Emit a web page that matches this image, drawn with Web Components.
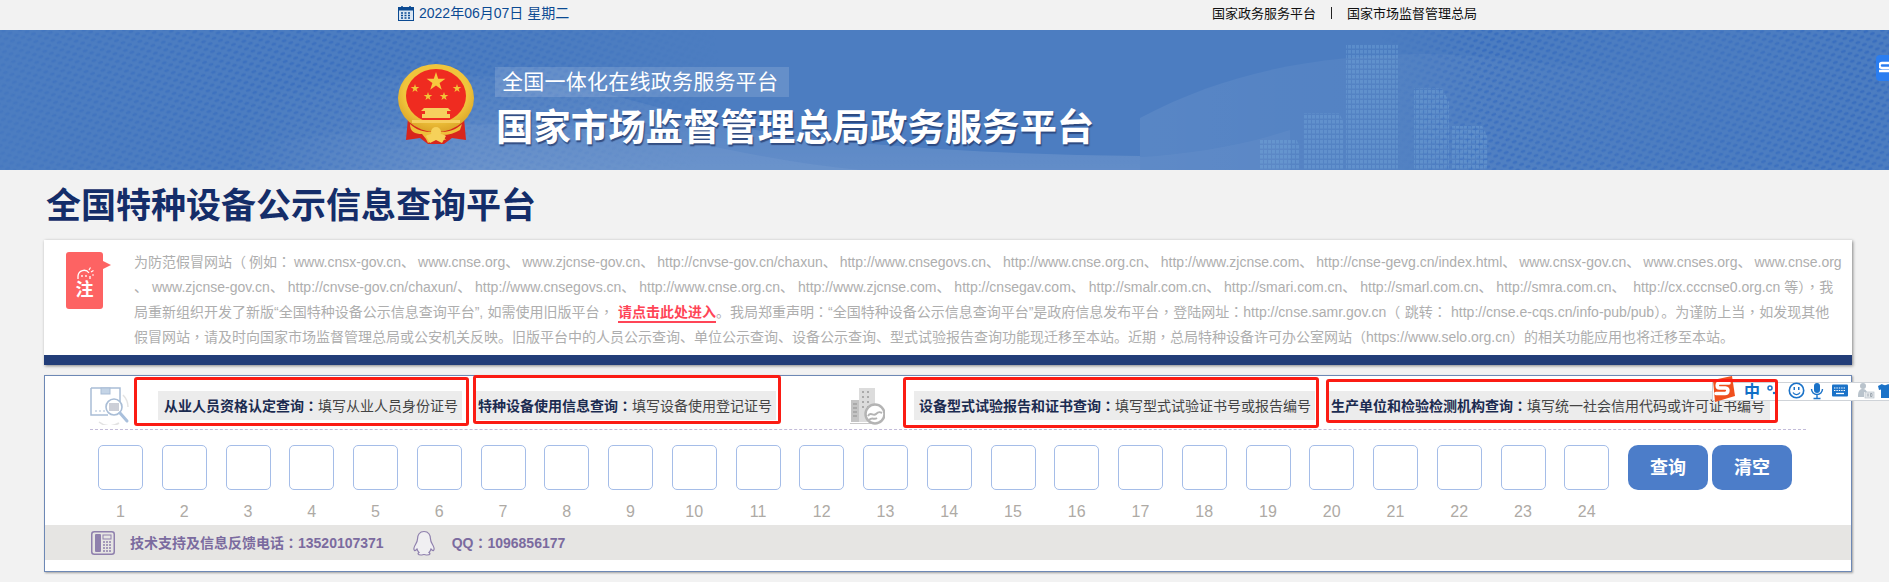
<!DOCTYPE html>
<html>
<head>
<meta charset="utf-8">
<title>全国特种设备公示信息查询平台</title>
<style>
  html, body { margin: 0; height: 582px; overflow: hidden; background: #f2f2f2; }
  body { position: relative; font-family: "Liberation Sans", "Noto Sans CJK SC", sans-serif; }
  /* the reference has centred full-width punctuation */
  i.p { font-style: normal; font-family: "Noto Sans CJK TC", sans-serif; }
  /* nested in a line span, so ::slotted can't reach it */
  notice-card a { color: #ff4557; font-weight: bold; padding-bottom: 1px; border-bottom: 2px solid #ff4557; }
</style>
</head>
<body>
<page-lines></page-lines>

<top-bar>
  <span slot="date">2022年06月07日 星期二</span>
  <span slot="link-a">国家政务服务平台</span>
  <span slot="link-b">国家市场监督管理总局</span>
</top-bar>

<site-banner>
  <span slot="sub">全国一体化在线政务服务平台</span>
  国家市场监督管理总局政务服务平台
</site-banner>

<page-title>全国特种设备公示信息查询平台</page-title>

<notice-card><span style="word-spacing:-.9px">为防范假冒网站<i class="p">（</i> 例如<i class="p">：</i> www.cnsx-gov.cn、 www.cnse.org、 www.zjcnse-gov.cn、 http://cnvse-gov.cn/chaxun、 http://www.cnsegovs.cn、 http://www.cnse.org.cn、 http://www.zjcnse.com、 http://cnse-gevg.cn/index.html、 www.cnsx-gov.cn、 www.cnses.org、 www.cnse.org</span><br>、 www.zjcnse-gov.cn、 http://cnvse-gov.cn/chaxun/、 http://www.cnsegovs.cn、 http://www.cnse.org.cn、 http://www.zjcnse.com、 http://cnsegav.com、 http://smalr.com.cn、 http://smari.com.cn、 http://smarl.com.cn、 http://smra.com.cn、 &nbsp;http://cx.cccnse0.org.cn 等<i class="p">）</i><i class="p">，</i>我<br><span style="word-spacing:.5px">局重新组织开发了新版“全国特种设备公示信息查询平台”, 如需使用旧版平台<i class="p">，</i> <a>请点击此处进入</a>。我局郑重声明<i class="p">：</i>“全国特种设备公示信息查询平台”是政府信息发布平台<i class="p">，</i>登陆网址<i class="p">：</i>http://cnse.samr.gov.cn<i class="p">（</i> 跳转<i class="p">：</i> http://cnse.e-cqs.cn/info-pub/pub<i class="p">）</i>。为谨防上当<i class="p">，</i>如发现其他</span><br>假冒网站<i class="p">，</i>请及时向国家市场监督管理总局或公安机关反映。旧版平台中的人员公示查询、单位公示查询、设备公示查询、型式试验报告查询功能现迁移至本站。近期<i class="p">，</i>总局特种设备许可办公室网站<i class="p">（</i>https://www.selo.org.cn<i class="p">）</i>的相关功能应用也将迁移至本站。</notice-card>

<query-panel>
  <svg slot="tabs" width="40" height="38" viewBox="0 0 40 38" style="flex:none;margin:-4px 28px 0 0">
    <g fill="none" stroke="#a9bdd6" stroke-width="1.5">
      <path d="M1 1h29v22" /><path d="M1 1v27h17" />
    </g>
    <rect x="11" y="1" width="9" height="6" fill="#c4d4e6" stroke="#a9bdd6"/>
    <path d="M5 24h2m2 0h2m2 0h2" stroke="#a9bdd6" stroke-width="1.2"/>
    <path d="M9 35a17 17 0 0 0 20 1M33 8a17 17 0 0 1 5 12" fill="none" stroke="#e3e3e3" stroke-width="1.5"/>
    <circle cx="24" cy="20" r="8" fill="#fff" stroke="#a9bdd6" stroke-width="1.6"/>
    <path d="M20 16v8m2-8v8m2-8v8m2-8v8m2-8v8" stroke="#9a9fb0" stroke-width="1"/>
    <path d="M30 26l7 8" stroke="#a9c0dc" stroke-width="3" stroke-linecap="round"/>
  </svg>
  <query-tab slot="tabs" title-text="从业人员资格认定查询" style="--w:304px;--pl:6px;--rt:-14px;--rr:-7px;--rb:-6px;--rl:-24px">填写从业人员身份证号</query-tab>
  <query-tab slot="tabs" title-text="特种设备使用信息查询" style="--w:301px;--pl:3px;margin-left:13px;--rt:-16px;--rr:-5px;--rb:-4px;--rl:-2px">填写设备使用登记证号</query-tab>
  <svg slot="tabs" width="35" height="38" viewBox="0 0 35 38" style="flex:none;margin:-4px 29px 0 74px">
    <rect x="9" y="1" width="16" height="34" fill="#dcdcdc"/>
    <rect x="1" y="13" width="8" height="22" fill="#c4c4c4"/>
    <path d="M12 5h2m3 0h2m-7 5h2m3 0h2m-7 5h2m3 0h2m-7 5h2m3 0h2M3 17h4M3 21h4M3 25h4M3 29h4" stroke="#aaa" stroke-width="2"/>
    <path d="M0 36.500h24" stroke="#c8c8c8"/>
    <circle cx="25" cy="27" r="9.500" fill="#fff" stroke="#b4b4b4" stroke-width="2.500"/>
    <path d="M18 29c3-5 5 1 8-2s4-2 6-1M19 33c3-3 5 0 8-2" fill="none" stroke="#b4b4b4" stroke-width="2"/>
  </svg>
  <query-tab slot="tabs" title-text="设备型式试验报告和证书查询" style="--w:401px;--pl:5px;--rt:-14px;--rr:-4px;--rb:-8px;--rl:-11px">填写型式试验证书号或报告编号</query-tab>
  <query-tab slot="tabs" title-text="生产单位和检验检测机构查询" style="--w:442px;--pl:3px;margin-left:13px;--rt:-12px;--rr:-8px;--rb:-3px;--rl:-2px">填写统一社会信用代码或许可证书编号</query-tab>

  <code-cell slot="cells" num="1"></code-cell><code-cell slot="cells" num="2"></code-cell><code-cell slot="cells" num="3"></code-cell><code-cell slot="cells" num="4"></code-cell><code-cell slot="cells" num="5"></code-cell><code-cell slot="cells" num="6"></code-cell><code-cell slot="cells" num="7"></code-cell><code-cell slot="cells" num="8"></code-cell><code-cell slot="cells" num="9"></code-cell><code-cell slot="cells" num="10"></code-cell><code-cell slot="cells" num="11"></code-cell><code-cell slot="cells" num="12"></code-cell><code-cell slot="cells" num="13"></code-cell><code-cell slot="cells" num="14"></code-cell><code-cell slot="cells" num="15"></code-cell><code-cell slot="cells" num="16"></code-cell><code-cell slot="cells" num="17"></code-cell><code-cell slot="cells" num="18"></code-cell><code-cell slot="cells" num="19"></code-cell><code-cell slot="cells" num="20"></code-cell><code-cell slot="cells" num="21"></code-cell><code-cell slot="cells" num="22"></code-cell><code-cell slot="cells" num="23"></code-cell><code-cell slot="cells" num="24"></code-cell>

  <action-button slot="actions">查询</action-button>
  <action-button slot="actions">清空</action-button>

  <svg slot="footer" width="24" height="24" viewBox="0 0 24 24" style="flex:none">
    <rect x=".75" y=".75" width="22.500" height="22.500" rx="2.500" fill="none" stroke="#8f80ad" stroke-width="1.500"/>
    <rect x="4" y="3" width="6" height="18" rx="1" fill="#8f80ad"/>
    <rect x="12" y="4" width="8" height="4" fill="none" stroke="#8f80ad"/>
    <path d="M12 11h2m1 0h2m1 0h2M12 14h2m1 0h2m1 0h2M12 17h2m1 0h2m1 0h2M12 20h2m1 0h2m1 0h2" stroke="#8f80ad" stroke-width="1.600"/>
  </svg>
  <span slot="footer" style="margin-left:15px">技术支持及信息反馈电话<i class="p">：</i>13520107371</span>
  <svg slot="footer" width="24" height="26" viewBox="0 0 24 26" style="flex:none;margin-left:28px">
    <path d="M12 1.500c-4.500 0-6.500 3.500-6.500 7.500 0 2-.5 3-2 5.500-1.500 2.500-2 5-1 6 .8.500 1.500-.5 2.500-1.500.5 1.500 1 2.500 2 3.500-1.500.8-1.500 2.500 2 2.500 1.500 0 2-.5 3-.5s1.500.5 3 .5c3.500 0 3.500-1.700 2-2.500 1-1 1.500-2 2-3.500 1 1 1.700 2 2.500 1.500 1-1 .5-3.500-1-6-1.500-2.500-2-3.500-2-5.500 0-4-2-7.500-6.500-7.500z" fill="#f0eff2" stroke="#8f80ad" stroke-width="1.200"/>
  </svg>
  <span slot="footer" style="margin-left:16px">QQ<i class="p">：</i>1096856177</span>
</query-panel>

<ime-toolbar></ime-toolbar>

<script>
// shared font stack, shadow styles name it themselves
const FONT = '"Liberation Sans", "Noto Sans CJK SC", sans-serif';

class BaseElement extends HTMLElement {
  constructor() {
    super();
    this.attachShadow({ mode: 'open' });
  }
  connectedCallback() {
    this.shadowRoot.innerHTML = `<style>${this.styles()}</style>${this.render()}`;
  }
  styles() { return ''; }
  render() { return '<slot></slot>'; }
}

// faint curved lines of the page background
class PageLines extends BaseElement {
  styles() {
    return `:host { position: absolute; inset: 0; z-index: -1; display: block; overflow: hidden; }
      svg { display: block; }`;
  }
  render() {
    let top = '';
    for (let i = 0; i < 9; i++) {
      const x = i * 62;
      top += `<path d="M${x - 40} 32C${x + 60} 10 ${x + 130} -4 ${x + 210} -20"/>`;
      top += `<path d="M${1160 + i * 80} 32C${1240 + i * 70} 12 ${1300 + i * 60} -6 ${1400 + i * 50} -24"/>`;
      top += `<path d="M${1120 + i * 60} ${i * 2}C${1300 + i * 40} 34 ${1500 + i * 30} 30 ${1700 + i * 24} -4"/>`;
    }
    top += '<path d="M0 8C120 18 240 14 340 -4M0 26C200 34 330 22 460 -6"/>';
    let low = '';
    for (let i = 0; i < 14; i++) {
      const y = 372 + i * 16;
      low += `<path d="M-10 ${y}C14 ${y + 18} 30 ${y + 30} 46 ${y + 54}"/>`;
      low += `<path d="M1850 ${y + 6}C1866 ${y - 10} 1880 ${y - 16} 1900 ${y - 20}"/>`;
      low += `<path d="M${i * 150 - 30} 582C${i * 150 + 20} 574 ${i * 150 + 60} 570 ${i * 150 + 90} 564"/>`;
      low += `<path d="M${i * 140 + 40} 376C${i * 140 + 70} 370 ${i * 140 + 100} 366 ${i * 140 + 120} 360"/>`;
    }
    return `<svg width="1889" height="582" fill="none" stroke="#dfe7f2" stroke-width="1.300">${top}${low}</svg>`;
  }
}

class TopBar extends BaseElement {
  styles() {
    return `:host { display: flex; align-items: center; height: 30px; padding: 0 412px 4px 398px; box-sizing: border-box; font: 13px/1 ${FONT}; color: #111; }
      .date { display: flex; align-items: center; gap: 5px; font-size: 14px; color: #0b4a92; }
      .links { margin-left: auto; display: flex; align-items: center; gap: 15px; }
      .sep { width: 1px; height: 12px; background: #222; }`;
  }
  render() {
    return `<div class="date">
        <svg width="16" height="15" viewBox="0 0 16 15"><rect x=".5" y="1.500" width="15" height="13" fill="#dbe6f2" stroke="#0b4a92"/><rect x="0" y="1" width="16" height="3.500" fill="#0b4a92"/><path d="M4 0v2M12 0v2" stroke="#0b4a92" stroke-width="1.500"/><path d="M3 7h2m1.500 0h2m1.500 0h2M3 9.500h2m1.500 0h2m1.500 0h2M3 12h2m1.500 0h2m1.500 0h2" stroke="#0b4a92" stroke-width="1.300"/></svg>
        <slot name="date"></slot>
      </div>
      <div class="links"><slot name="link-a"></slot><span class="sep"></span><slot name="link-b"></slot></div>`;
  }
}

class SiteBanner extends BaseElement {
  styles() {
    return `:host { display: flex; position: relative; height: 140px; padding: 34px 0 0 398px; box-sizing: border-box; background: #4c7dc1; overflow: hidden; }
      .deco { position: absolute; left: 0; top: 0; }
      .emblem { position: relative; flex: none; width: 76px; height: 80px; }
      .copy { position: relative; margin-left: 21px; }
      .sub { width: 294px; height: 30px; padding-left: 7px; margin-top: 3px; box-sizing: border-box; background: rgba(255,255,255,.14); font: 21px/30px ${FONT}; letter-spacing: .25px; color: #fff; white-space: nowrap; }
      .main { margin: 11px 0 0 1px; font: bold 37.4px/40px ${FONT}; color: #fff; white-space: nowrap; text-shadow: 1px 2px 1px rgba(30,50,100,.7); }
      .tab { position: absolute; right: 0; top: 25px; width: 13px; height: 26px; background: #2a7df0; border-radius: 4px 0 0 4px; }
      .tab svg { display: block; margin: 6px 0 0 3px; }`;
  }
  render() {
    const tower = (x, y, w, h, slant) =>
      `<path d="M${x} 140V${y}H${x + w - slant}L${x + w} ${y + slant * 2}V140Z" fill="url(#pix)"/>`;
    return `<svg class="deco" width="1889" height="140" viewBox="0 0 1889 140">
        <defs>
          <pattern id="dots" width="11" height="8" patternUnits="userSpaceOnUse" patternTransform="rotate(-18)">
            <ellipse cx="3" cy="2" rx="2.600" ry="1.500" fill="#2f66bd"/><ellipse cx="8.500" cy="6" rx="2.600" ry="1.500" fill="#2f66bd"/>
          </pattern>
          <pattern id="pix" width="4" height="5" patternUnits="userSpaceOnUse">
            <rect width="3" height="3.500" fill="#7fb4e2"/>
          </pattern>
          <radialGradient id="fadeL" gradientUnits="userSpaceOnUse" cx="300" cy="30" r="420" gradientTransform="translate(0 20) scale(1 .7)">
            <stop offset="0" stop-color="#fff" stop-opacity=".55"/><stop offset=".6" stop-color="#fff" stop-opacity=".3"/><stop offset="1" stop-color="#fff" stop-opacity="0"/>
          </radialGradient>
          <radialGradient id="fadeR" gradientUnits="userSpaceOnUse" cx="1680" cy="40" r="300">
            <stop offset="0" stop-color="#fff" stop-opacity=".3"/><stop offset=".65" stop-color="#fff" stop-opacity=".65"/><stop offset="1" stop-color="#fff" stop-opacity="0"/>
          </radialGradient>
          <linearGradient id="fadeIn" gradientUnits="userSpaceOnUse" x1="230" x2="470" y1="0" y2="0">
            <stop offset="0" stop-color="#000"/><stop offset="1" stop-color="#fff"/>
          </linearGradient>
          <mask id="mL"><rect width="800" height="140" fill="url(#fadeL)"/></mask>
          <mask id="mR"><rect x="1300" width="589" height="140" fill="url(#fadeR)"/></mask>
          <mask id="mLobe"><rect width="1889" height="140" fill="url(#fadeIn)"/></mask>
          <linearGradient id="lobe" x1="0" x2="0" y1="0" y2="1"><stop offset="0" stop-color="#fff" stop-opacity=".03"/><stop offset="1" stop-color="#fff" stop-opacity=".13"/></linearGradient>
          <linearGradient id="lobeR" x1="0" x2="1"><stop offset="0" stop-color="#fff" stop-opacity=".07"/><stop offset="1" stop-color="#fff" stop-opacity="0"/></linearGradient>
        </defs>
        <rect width="800" height="140" fill="url(#dots)" mask="url(#mL)"/>
        <rect x="1300" width="589" height="140" fill="url(#dots)" mask="url(#mR)"/>
        <g mask="url(#mLobe)">
          <path d="M230 74C400 28 540 40 680 84C780 112 960 124 1140 126V140H230Z" fill="url(#lobe)"/>
          <path d="M230 118C500 78 620 96 720 118C780 130 820 136 860 140H230Z" fill="#fff" opacity=".05"/>
        </g>
        <path d="M1140 88C1230 40 1320 26 1420 24C1500 24 1600 40 1700 60V140H1140Z" fill="url(#lobeR)"/>
        <path d="M1140 127C1190 124 1240 116 1290 100V140H1140Z" fill="#fff" opacity=".04"/>
        <g opacity=".3">
          ${tower(1259, 109, 41, 57, 4)}
          ${tower(1303, 83, 41, 57, 5)}
          <rect x="1346" y="14" width="52" height="126" fill="url(#pix)"/>
          ${tower(1414, 58, 35, 82, 7)}
          ${tower(1452, 96, 35, 44, 5)}
        </g>
      </svg>
      <svg class="emblem" viewBox="0 0 76 80">
        <defs><radialGradient id="gold" cx=".5" cy=".4" r=".6"><stop offset=".7" stop-color="#f0c53c"/><stop offset="1" stop-color="#dba428"/></radialGradient></defs>
        <path d="M10 54L8 76l14-2 8 6h16l8-6 14 2-2-22z" fill="#d8261c"/>
        <ellipse cx="38" cy="34" rx="38" ry="34" fill="url(#gold)"/>
        <ellipse cx="38" cy="32" rx="30" ry="27" fill="#ef2b20"/>
        <path d="M38 8l2.200 6.800h7.200l-5.800 4.200 2.200 6.800-5.800-4.200-5.800 4.200 2.200-6.800-5.800-4.200h7.200z" fill="#f7c93e"/>
        <path d="M17 20l1 3.100h3.300l-2.700 1.900 1 3.100-2.600-1.900-2.600 1.900 1-3.100-2.700-1.900h3.300zM59 20l1 3.100h3.300l-2.700 1.900 1 3.100-2.600-1.900-2.600 1.900 1-3.100-2.700-1.900h3.300zM30 28l1 3.100h3.300l-2.700 1.900 1 3.100-2.600-1.900-2.600 1.900 1-3.100-2.700-1.900h3.300zM46 28l1 3.100h3.300l-2.700 1.900 1 3.100-2.600-1.900-2.600 1.900 1-3.100-2.700-1.900h3.300z" fill="#f3c437"/>
        <path d="M26 44h24l3 3h-4v3h3v4H24v-4h3v-3h-4zM14 56h48v3H14z" fill="#f6cf5e"/>
        <path d="M12 60c6 6 14 8 20 8h12c6 0 14-2 20-8l-2 6c-5 3-11 5-18 5l4 5-10-1-8 4-2-4-4-5c-7 0-12-2-12-10z" fill="#eec03a"/>
        <path d="M28 72c3-3 17-3 20 0l-4 7-6-3-6 3z" fill="#f6d15a"/>
        <circle cx="38" cy="68" r="5" fill="#f6d15a"/>
      </svg>
      <div class="copy">
        <div class="sub"><slot name="sub"></slot></div>
        <div class="main"><slot></slot></div>
      </div>
      <div class="tab"><svg width="10" height="14" viewBox="0 0 10 14"><path d="M10 2H3a2 2 0 0 0 0 5h7M0 10h10" fill="none" stroke="#fff" stroke-width="2.500"/></svg></div>`;
  }
}

class PageTitle extends BaseElement {
  styles() {
    return `:host { display: flex; align-items: center; height: 70px; padding-left: 46px; font: bold 35px/1 ${FONT}; color: #142d69; }`;
  }
}

class NoticeCard extends BaseElement {
  styles() {
    return `:host { display: block; width: 1808px; margin-left: 44px; background: #fff; border-bottom: 10px solid #223d78; box-shadow: 1px 1px 3px rgba(0,0,0,.45); }
      .row { display: flex; height: 115px; box-sizing: border-box; padding-top: 9px; }
      .badge { position: relative; flex: none; width: 37px; height: 57px; margin: 3px 31px 0 22px; background: #fd6363; border-radius: 3px; color: #fff; text-align: center; font: bold 18px/1 ${FONT}; }
      .badge::after { content: ""; position: absolute; left: 100%; top: 9px; border: 4px solid transparent; border-left: 8px solid #fd6363; border-right: 0; }
      .badge svg { display: block; margin: 15px auto 1px; }
      .text { font: 14px/24px ${FONT}; color: #aeaeae; white-space: nowrap; }`;
  }
  render() {
    return `<div class="row">
        <div class="badge"><svg width="18" height="13" viewBox="0 0 18 13"><path d="M2 12V9a6 6 0 0 1 11-3M14 9v3" fill="none" stroke="#fff" stroke-width="1.300"/><path d="M13 3l1.500-2.500M15 5l2.500-1.500M16 8h2" stroke="#fff" stroke-width="1.200"/><circle cx="6" cy="9" r=".9" fill="#fff"/><circle cx="10" cy="9" r=".9" fill="#fff"/></svg>注</div>
        <div class="text"><slot></slot></div>
      </div>`;
  }
}

class QueryPanel extends BaseElement {
  styles() {
    return `:host { display: block; box-sizing: border-box; width: 1808px; height: 197px; margin: 10px 0 0 44px; background: #fff; border: 1px solid #6d88b5; box-shadow: 1px 1px 2px rgba(0,0,0,.35); }
      .tabs { display: flex; align-items: flex-start; height: 54px; box-sizing: border-box; margin-left: 45px; width: 1716px; padding-top: 15px; border-bottom: 1px dashed #c3bcd9; }
      .cells { display: flex; align-items: flex-start; height: 95px; box-sizing: border-box; padding: 15px 0 0 53px; gap: 18.75px; }
      .actions { display: flex; gap: 4px; }
      .footer { display: flex; align-items: center; height: 35px; padding-left: 46px; background: #e6e5e3; font: bold 14px/1 ${FONT}; color: #7b6b9f; }`;
  }
  render() {
    return `<div class="tabs"><slot name="tabs"></slot></div>
      <div class="cells"><slot name="cells"></slot><div class="actions"><slot name="actions"></slot></div></div>
      <div class="footer"><slot name="footer"></slot></div>`;
  }
}

class QueryTab extends BaseElement {
  styles() {
    return `:host { display: block; position: relative; flex: none; box-sizing: border-box; width: var(--w); height: 29px; padding-left: var(--pl); background: #ececec; font: 14px/29px ${FONT}; color: #444; white-space: nowrap; }
      b { color: #1b2b50; }
      b i { font-style: normal; font-family: "Noto Sans CJK TC", sans-serif; }
      /* red annotation drawn over the screenshot */
      :host::after { content: ""; position: absolute; z-index: 2; top: var(--rt); right: var(--rr); bottom: var(--rb); left: var(--rl); border: 3px solid #fb1c14; border-radius: 3px; pointer-events: none; }`;
  }
  render() {
    return `<b>${this.getAttribute('title-text')}<i>：</i></b><slot></slot>`;
  }
}

class CodeCell extends BaseElement {
  styles() {
    return `:host { display: block; flex: none; width: 45px; }
      input { display: block; box-sizing: border-box; width: 45px; height: 45px; margin: 0; padding: 0; background: #fff; border: 1px solid #a5bde8; border-radius: 5px; outline: none; }
      span { display: block; margin-top: 13px; text-align: center; font: 16px/18px ${FONT}; color: #aeaaa5; }`;
  }
  render() {
    return `<input type="text" maxlength="1"><span>${this.getAttribute('num')}</span>`;
  }
}

class ActionButton extends BaseElement {
  styles() {
    return `:host { display: block; }
      button { display: block; width: 80px; height: 45px; padding: 0; border: 0; border-radius: 10px; background: #4c7dc9; color: #fff; font: bold 18px/1 ${FONT}; }`;
  }
  render() {
    return '<button type="button"><slot></slot></button>';
  }
}

// input method toolbar lying over the bottom panel
class ImeToolbar extends BaseElement {
  styles() {
    return `:host { position: absolute; left: 1712px; top: 382px; z-index: 1; display: block; width: 177px; height: 19px; box-sizing: border-box; background: #fff; border: 1px solid #cfd3d8; border-right: 0; }
      .logo { position: absolute; z-index: 3; left: -3px; top: -8px; }
      .zh { position: absolute; left: 31px; top: -1px; font: bold 16px/19px ${FONT}; color: #0f6fc6; }
      svg.icons { position: absolute; left: 54px; top: -1px; }`;
  }
  render() {
    return `<svg class="logo" width="25" height="28" viewBox="0 0 25 28">
        <path d="M3 5L22 1l3 20-20 6z" fill="#f0501e"/>
        <path d="M19 8H9.500c-3 0-3 5 0 5h6c3.500 0 3 5.500-.5 5.500H6" fill="none" stroke="#fff" stroke-width="3.600" stroke-linecap="round"/>
      </svg>
      <span class="zh">中</span>
      <svg class="icons" width="123" height="19" viewBox="0 0 123 19" fill="#1a72c8">
        <circle cx="3" cy="6" r="2" fill="none" stroke="#1a72c8" stroke-width="1.500"/>
        <circle cx="7" cy="11" r="1.200"/>
        <circle cx="29.500" cy="8.500" r="7.200" fill="none" stroke="#1a72c8" stroke-width="1.600"/>
        <path d="M26 10.500a4 4 0 0 0 7 0" fill="none" stroke="#1a72c8" stroke-width="1.300"/>
        <rect x="26.500" y="5" width="1.500" height="3"/><rect x="31" y="5" width="1.500" height="3"/>
        <rect x="47" y="1" width="6" height="10" rx="3"/>
        <path d="M44.500 7a5.500 5.500 0 0 0 11 0M50 13v3M46.500 16.500h7" fill="none" stroke="#1a72c8" stroke-width="1.400"/>
        <rect x="65" y="2.500" width="16" height="12" rx="1"/>
        <path d="M67 6h12M67 8.500h12" stroke="#fff" stroke-width="1.200" stroke-dasharray="1.400 1"/><path d="M69 11.500h8" stroke="#fff" stroke-width="1.300"/>
        <circle cx="96" cy="4" r="3" fill="#b9c3cc"/><path d="M91 15c0-7 2-8 5-8 2 0 3 1 4 3h-3v5z" fill="#b9c3cc"/>
        <rect x="98" y="10" width="9" height="6" fill="#e3e7ea" stroke="#b9c3cc" stroke-width=".7"/>
        <path d="M101 11.500v3M103.500 11.500h1.500v3h-1.500z" stroke="#8f9aa4" stroke-width=".8" fill="none"/>
        <path d="M115 2l-4 2 1 4 2-.5V16h8V7.500l2 .5 1-4-4-2c-1 1.500-5 1.500-6 0z"/>
      </svg>`;
  }
}

customElements.define('page-lines', PageLines);
customElements.define('top-bar', TopBar);
customElements.define('site-banner', SiteBanner);
customElements.define('page-title', PageTitle);
customElements.define('notice-card', NoticeCard);
customElements.define('query-panel', QueryPanel);
customElements.define('query-tab', QueryTab);
customElements.define('code-cell', CodeCell);
customElements.define('action-button', ActionButton);
customElements.define('ime-toolbar', ImeToolbar);
</script>
</body>
</html>
